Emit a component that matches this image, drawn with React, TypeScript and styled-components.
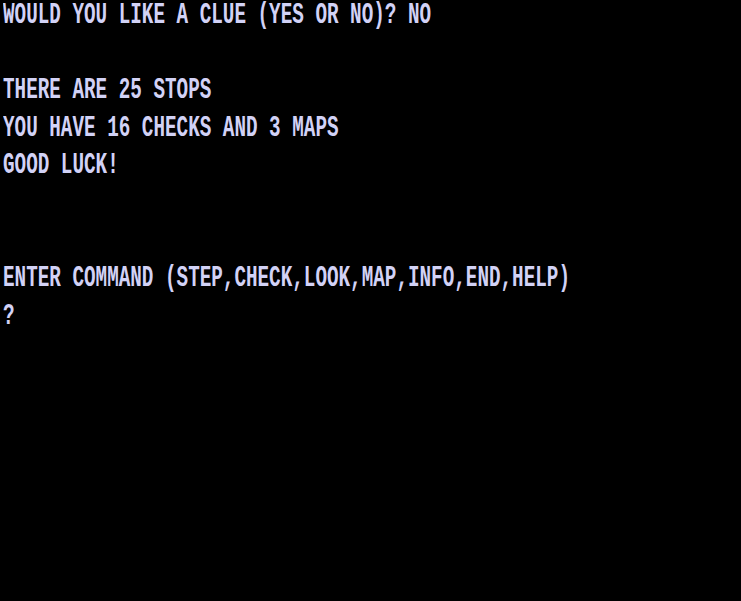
import React from "react";
import styled, { createGlobalStyle } from "styled-components";

const Global = createGlobalStyle`
  html, body { margin: 0; padding: 0; background: #000; }
  #root { width: 741px; height: 601px; }
`;

const Screen = styled.div`
  width: 741px;
  height: 601px;
  background: #000;
  display: grid;
  grid-template-rows: repeat(16, 1fr);
  overflow: hidden;
`;

const Row = styled.div`
  white-space: pre;
  padding-left: 3px;
`;

const Text = styled.span`
  display: inline-block;
  font-family: "Liberation Mono", "DejaVu Sans Mono", monospace;
  font-weight: bold;
  font-size: 19.3px;
  line-height: 21.9px;
  color: #d2d2f6;
  transform: scaleY(1.5);
  transform-origin: 0 0;
`;

const lines = [
  "WOULD YOU LIKE A CLUE (YES OR NO)? NO",
  "",
  "THERE ARE 25 STOPS",
  "YOU HAVE 16 CHECKS AND 3 MAPS",
  "GOOD LUCK!",
  "",
  "",
  "ENTER COMMAND (STEP,CHECK,LOOK,MAP,INFO,END,HELP)",
  "?",
  "", "", "", "", "", "", "",
];

export default function App() {
  return (
    <>
      <Global />
      <Screen>
        {lines.map((l, i) => (
          <Row key={i}>
            <Text>{l}</Text>
          </Row>
        ))}
      </Screen>
    </>
  );
}
